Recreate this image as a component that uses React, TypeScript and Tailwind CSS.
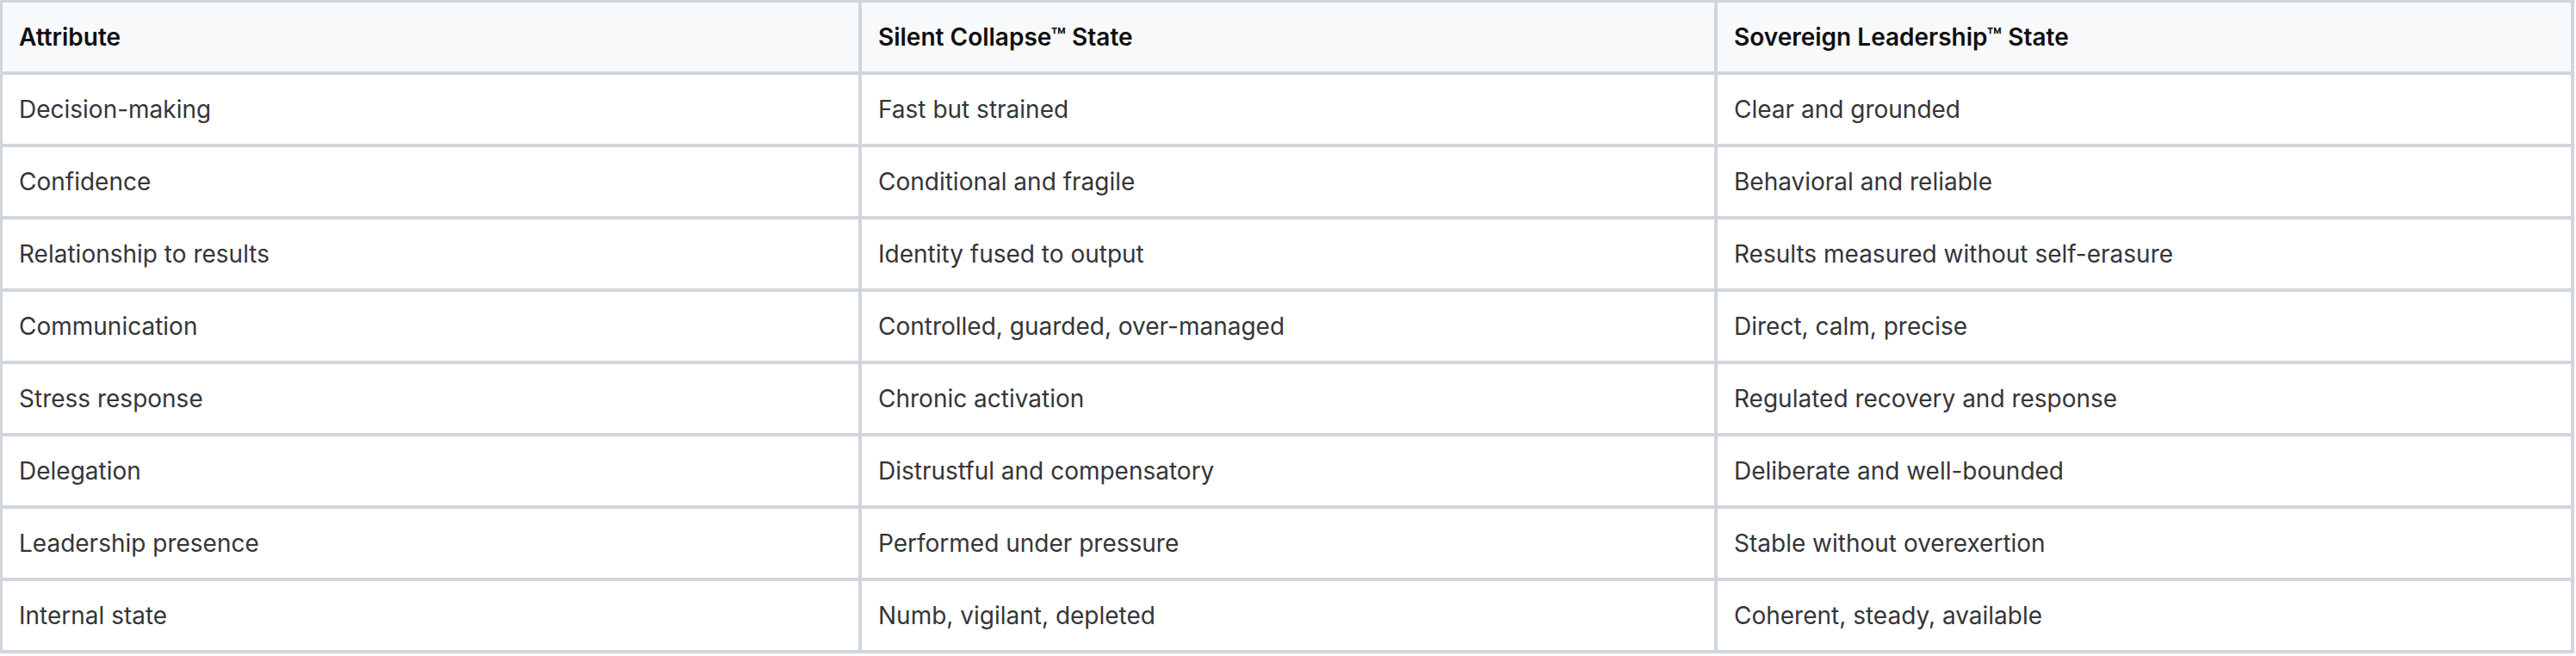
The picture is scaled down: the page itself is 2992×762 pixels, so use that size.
import React from "react";

const rows: [string, string, string][] = [
  ["Decision-making", "Fast but strained", "Clear and grounded"],
  ["Confidence", "Conditional and fragile", "Behavioral and reliable"],
  ["Relationship to results", "Identity fused to output", "Results measured without self-erasure"],
  ["Communication", "Controlled, guarded, over-managed", "Direct, calm, precise"],
  ["Stress response", "Chronic activation", "Regulated recovery and response"],
  ["Delegation", "Distrustful and compensatory", "Deliberate and well-bounded"],
  ["Leadership presence", "Performed under pressure", "Stable without overexertion"],
  ["Internal state", "Numb, vigilant, depleted", "Coherent, steady, available"],
];

const headers = ["Attribute", "Silent Collapse™ State", "Sovereign Leadership™ State"];

export default function App() {
  return (
    <div className="bg-white w-[2992px] h-[762px]" style={{ fontFamily: "Inter, 'Liberation Sans', sans-serif" }}>
      <div className="w-[2990px] grid grid-cols-[998px_994px_995px] border-l-[3px] border-t-[3px] border-[#d1d6dc]">
        {headers.map((h) => (
          <div
            key={h}
            className="h-[84px] flex items-center pl-[19px] bg-[#f8f9fa] border-r-4 border-b-4 border-[#d1d6dc] text-[28px] font-semibold text-[#0f0f10]"
          >
            {h}
          </div>
        ))}
        {rows.map((r, i) =>
          r.map((c, j) => (
            <div
              key={`${i}-${j}`}
              className="h-[84px] flex items-center pl-[19px] bg-white border-r-4 border-b-4 border-[#d1d6dc] text-[28px] text-[#353538]"
            >
              {c}
            </div>
          ))
        )}
      </div>
    </div>
  );
}
